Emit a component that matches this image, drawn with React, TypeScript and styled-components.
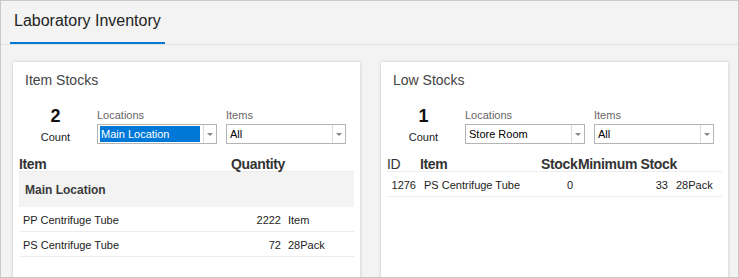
import React from 'react';
import styled, { createGlobalStyle } from 'styled-components';

const Global = createGlobalStyle`
  html, body { margin: 0; padding: 0; }
  body { font-family: "Liberation Sans", Arial, sans-serif; background: #f3f3f3; color: #222; }
  * { box-sizing: border-box; }
`;

const Frame = styled.div`
  width: 739px;
  height: 278px;
  border: 1px solid #c9c9c9;
  background: #f3f3f3;
  display: flex;
  flex-direction: column;
  overflow: hidden;
`;

const TopBar = styled.header`
  flex: none;
  height: 44px;
  border-bottom: 1px solid #e2e2e2;
  padding-left: 9px;
  display: flex;
`;

const Tab = styled.div`
  width: 155px;
  border-bottom: 2px solid #0078d4;
  padding: 10px 0 0 4px;
  font-size: 16px;
  line-height: 20px;
  color: #222;
`;

const Content = styled.main`
  flex: 1;
  min-height: 0;
  display: grid;
  grid-template-columns: 347px 347px;
  column-gap: 21px;
  align-items: start;
  padding: 17px 10px 0 12px;
`;

const Panel = styled.section`
  background: #fff;
  box-shadow: 0 0 3px rgba(0, 0, 0, 0.2);
  height: 240px;
`;

const PanelTitle = styled.h2`
  margin: 0;
  padding: 8px 12px 0;
  font-size: 14px;
  font-weight: 400;
  line-height: 20px;
  color: #444;
`;

const FilterRow = styled.div`
  display: flex;
  gap: 9px;
  margin-top: 16px;
  padding-left: 12px;
`;

const CountBlock = styled.div`
  width: 61px;
  margin-right: 2px;
  text-align: center;
`;

const CountValue = styled.div`
  font-size: 18px;
  font-weight: 700;
  line-height: 20px;
  color: #111;
`;

const CountLabel = styled.div`
  margin-top: 3px;
  font-size: 11px;
  line-height: 16px;
  color: #222;
`;

const Field = styled.div`
  width: 120px;
`;

const FieldLabel = styled.div`
  font-size: 11px;
  line-height: 18px;
  color: #666;
`;

const SelectBox = styled.div`
  height: 20px;
  border: 1px solid #b4b4b4;
  background: #fff;
  display: flex;
`;

const SelectValue = styled.div`
  flex: 1;
  padding: 1px 3px 1px 2px;
  display: flex;
`;

const ValueText = styled.span<{ $selected?: boolean }>`
  flex: 1;
  display: flex;
  align-items: center;
  padding-left: 1px;
  font-size: 11px;
  color: ${(p) => (p.$selected ? '#fff' : '#000')};
  background: ${(p) => (p.$selected ? '#0078d7' : 'transparent')};
`;

const ArrowZone = styled.div`
  width: 13px;
  border-left: 1px solid #dcdcdc;
  display: flex;
  align-items: center;
  justify-content: center;
`;

const Arrow = styled.span`
  width: 0;
  height: 0;
  border-left: 3px solid transparent;
  border-right: 3px solid transparent;
  border-top: 3px solid #888;
`;

const Table = styled.div`
  margin: 11px 6px 0;
`;

const Row = styled.div<{ $cols: string }>`
  display: grid;
  grid-template-columns: ${(p) => p.$cols};
  height: 25px;
  border-bottom: 1px solid #ececec;
  font-size: 11px;
  line-height: 22px;
  padding-top: 2px;
  color: #222;
`;

const HeadRow = styled(Row)`
  height: 16px;
  padding-top: 0;
  font-size: 14px;
  font-weight: 700;
  line-height: 16px;
  letter-spacing: -0.35px;
  color: #333;
  white-space: nowrap;
`;

const GroupRow = styled.div`
  height: 35px;
  background: #f3f3f3;
  padding: 2px 0 0 6px;
  font-size: 12px;
  font-weight: 700;
  line-height: 33px;
  color: #3a3a3a;
`;

const Cell = styled.div<{ $right?: boolean; $pl?: number; $pr?: number; $light?: boolean }>`
  text-align: ${(p) => (p.$right ? 'right' : 'left')};
  padding-left: ${(p) => p.$pl ?? 0}px;
  padding-right: ${(p) => p.$pr ?? 0}px;
  white-space: nowrap;
  ${(p) => (p.$light ? 'font-weight: 400;' : '')}
`;

function Select({ value, selected }: { value: string; selected?: boolean }) {
  return (
    <SelectBox>
      <SelectValue>
        <ValueText $selected={selected}>{value}</ValueText>
      </SelectValue>
      <ArrowZone>
        <Arrow />
      </ArrowZone>
    </SelectBox>
  );
}

function Filters({ count, location, selected }: { count: number; location: string; selected?: boolean }) {
  return (
    <FilterRow>
      <CountBlock>
        <CountValue>{count}</CountValue>
        <CountLabel>Count</CountLabel>
      </CountBlock>
      <Field>
        <FieldLabel>Locations</FieldLabel>
        <Select value={location} selected={selected} />
      </Field>
      <Field>
        <FieldLabel>Items</FieldLabel>
        <Select value="All" />
      </Field>
    </FilterRow>
  );
}

const stockCols = '207px 57px 71px';
const lowCols = '31px 120px 39px 93px 52px';

const stockRows = [
  { name: 'PP Centrifuge Tube', qty: '2222', unit: 'Item' },
  { name: 'PS Centrifuge Tube', qty: '72', unit: '28Pack' },
];

export default function App() {
  return (
    <>
      <Global />
      <Frame>
        <TopBar>
          <Tab>Laboratory Inventory</Tab>
        </TopBar>
        <Content>
          <Panel>
            <PanelTitle>Item Stocks</PanelTitle>
            <Filters count={2} location="Main Location" selected />
            <Table>
              <HeadRow $cols={stockCols}>
                <Cell>Item</Cell>
                <Cell $pl={5}>Quantity</Cell>
                <Cell />
              </HeadRow>
              <GroupRow>Main Location</GroupRow>
              {stockRows.map((r) => (
                <Row key={r.name} $cols={stockCols}>
                  <Cell $pl={4}>{r.name}</Cell>
                  <Cell $right $pr={2}>{r.qty}</Cell>
                  <Cell $pl={5}>{r.unit}</Cell>
                </Row>
              ))}
            </Table>
          </Panel>
          <Panel>
            <PanelTitle>Low Stocks</PanelTitle>
            <Filters count={1} location="Store Room" />
            <Table>
              <HeadRow $cols={lowCols}>
                <Cell $light>ID</Cell>
                <Cell $pl={2}>Item</Cell>
                <Cell $pl={3}>Stock</Cell>
                <Cell $pl={1}>Minimum Stock</Cell>
                <Cell />
              </HeadRow>
              <Row $cols={lowCols}>
                <Cell $right $pr={2}>1276</Cell>
                <Cell $pl={6}>PS Centrifuge Tube</Cell>
                <Cell $right $pr={4}>0</Cell>
                <Cell $right $pr={2}>33</Cell>
                <Cell $pl={6}>28Pack</Cell>
              </Row>
            </Table>
          </Panel>
        </Content>
      </Frame>
    </>
  );
}
